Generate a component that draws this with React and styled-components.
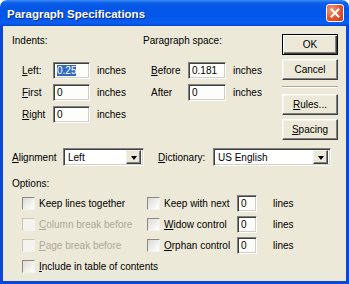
import React from 'react';
import styled, { createGlobalStyle } from 'styled-components';

const GlobalStyle = createGlobalStyle`
  html, body {
    margin: 0;
    padding: 0;
    background: #ffffff;
  }
  body {
    font-family: "Liberation Sans", Arial, sans-serif;
    font-size: 10px;
    color: #000;
  }
`;

const Window = styled.div`
  width: 349px;
  height: 284px;
  display: flex;
  flex-direction: column;
`;

const TitleBar = styled.div`
  flex: none;
  height: 26px;
  display: flex;
  align-items: center;
  justify-content: space-between;
  padding: 0 5px 0 7px;
  border-radius: 7px 7px 0 0;
  background: linear-gradient(to bottom, #3d8cf5 0px, #0b5fe9 3px, #0355e6 9px, #0358e9 18px, #0a5ff0 23px, #0046d6 26px);
`;

const Title = styled.span`
  color: #fff;
  font-weight: bold;
  font-size: 11.5px;
  padding-top: 2px;
  text-shadow: 1px 1px #0a2a8a;
`;

const CloseButton = styled.div`
  width: 16px;
  height: 16px;
  border: 1px solid #fff;
  border-radius: 3px;
  background: radial-gradient(circle at 30% 30%, #f19a7e, #e2542c 55%, #c53a14);
  display: flex;
  align-items: center;
  justify-content: center;
`;

const Body = styled.div`
  flex: 1;
  background: #ece9d8;
  border: 3px solid #0a47d8;
  border-top: 0;
  padding: 8px 0 0 9px;
`;

const TopSection = styled.div`
  display: flex;
  align-items: flex-start;
`;

const Group = styled.div`
  width: ${p => p.$width}px;
  display: flex;
  flex-direction: column;
`;

const Heading = styled.div`
  height: 12px;
  line-height: 12px;
  margin-top: 1px;
`;

const FieldList = styled.div`
  display: flex;
  flex-direction: column;
  gap: 5px;
  margin-top: ${p => p.$top || 15}px;
  padding-left: ${p => p.$indent}px;
`;

const FieldRow = styled.div`
  display: flex;
  align-items: center;
  height: 17px;
`;

const Label = styled.span`
  width: ${p => p.$width}px;
  flex: none;
  white-space: nowrap;
  color: ${p => (p.$disabled ? '#aca899' : '#000')};
`;

const Unit = styled.span`
  margin-left: ${p => p.$gap}px;
`;

const TextBox = styled.div`
  width: ${p => p.$width}px;
  height: 17px;
  box-sizing: border-box;
  border: 1px solid;
  border-color: #808080 #ffffff #ffffff #808080;
  box-shadow: inset 1px 1px #404040, inset -1px -1px #d4d0c8;
  background: #fdfdfb;
  padding: 2px 0 0 3px;
  line-height: 12px;
  white-space: nowrap;
  overflow: hidden;
`;

const Selected = styled.span`
  background: #316ac5;
  color: #fff;
`;

const ButtonColumn = styled.div`
  width: 56px;
  margin-top: 0px;
  display: flex;
  flex-direction: column;
  gap: 4px;
`;

const Button = styled.div`
  height: 21px;
  box-sizing: border-box;
  display: flex;
  align-items: center;
  justify-content: center;
  background: #ece9d8;
  border: 1px solid;
  border-color: ${p => (p.$default ? '#000' : '#fff #404040 #404040 #fff')};
  box-shadow: ${p =>
    p.$default
      ? 'inset 1px 1px #fff, inset -1px -1px #404040, inset -2px -2px #808080'
      : 'inset -1px -1px #808080, inset 1px 1px #f4f2ea'};
  font-size: 10px;
`;

const Separator = styled.div`
  height: 0;
  border-top: 1px solid #aca899;
  border-bottom: 1px solid #fff;
  margin: 2px 0 2px;
`;

const ComboRow = styled.div`
  display: flex;
  align-items: center;
  height: 18px;
  margin-top: 8px;
`;

const Combo = styled.div`
  width: ${p => p.$width}px;
  height: 18px;
  box-sizing: border-box;
  border: 1px solid;
  border-color: #808080 #ffffff #ffffff #808080;
  box-shadow: inset 1px 1px #404040, inset -1px -1px #d4d0c8;
  background: #fff;
  display: flex;
  align-items: center;
  justify-content: space-between;
  padding: 2px 2px 2px 4px;
`;

const DropButton = styled.div`
  width: 15px;
  height: 14px;
  box-sizing: border-box;
  background: #ece9d8;
  border: 1px solid;
  border-color: #f4f2ea #404040 #404040 #f4f2ea;
  box-shadow: inset -1px -1px #808080;
  display: flex;
  align-items: center;
  justify-content: center;
  &::after {
    content: '';
    border-left: 3.5px solid transparent;
    border-right: 3.5px solid transparent;
    border-top: 4px solid #000;
    margin-top: 1px;
  }
`;

const OptionsGrid = styled.div`
  display: grid;
  grid-template-columns: 125px auto;
  row-gap: 4px;
  margin-top: 5px;
  padding-left: 10px;
`;

const CheckRow = styled.div`
  display: flex;
  align-items: center;
  height: 17px;
  grid-column: ${p => (p.$wide ? '1 / 3' : 'auto')};
`;

const Box = styled.span`
  width: 13px;
  height: 13px;
  flex: none;
  box-sizing: border-box;
  border: 1px solid;
  border-color: ${p => (p.$disabled ? '#c9c7ba #f6f5ef #f6f5ef #c9c7ba' : '#8a8a85 #f3f3ee #f3f3ee #8a8a85')};
  background: ${p => (p.$disabled ? '#f4f3ee' : 'linear-gradient(135deg, #dcdcd4, #ffffff)')};
  margin-right: 4px;
`;

const U = styled.span`
  text-decoration: underline;
`;

const Lines = styled.span`
  margin-left: 16px;
`;

function Field({ label, value, selected, labelWidth, boxWidth, unitGap }) {
  return (
    <FieldRow>
      <Label $width={labelWidth}>{label}</Label>
      <TextBox $width={boxWidth}>{selected ? <Selected>{value}</Selected> : value}</TextBox>
      <Unit $gap={unitGap}>inches</Unit>
    </FieldRow>
  );
}

function Check({ children, disabled, wide }) {
  return (
    <CheckRow $wide={wide}>
      <Box $disabled={disabled} />
      <Label $disabled={disabled}>{children}</Label>
    </CheckRow>
  );
}

function CheckLines({ children, value }) {
  return (
    <CheckRow>
      <Box />
      <Label $width={73}>{children}</Label>
      <TextBox $width={20}>{value}</TextBox>
      <Lines>lines</Lines>
    </CheckRow>
  );
}

export default function App() {
  return (
    <>
      <GlobalStyle />
      <Window>
        <TitleBar>
          <Title>Paragraph Specifications</Title>
          <CloseButton>
            <svg width="10" height="10" viewBox="0 0 10 10">
              <path d="M1.5 1.5 L8.5 8.5 M8.5 1.5 L1.5 8.5" stroke="#fff" strokeWidth="2" strokeLinecap="square" />
            </svg>
          </CloseButton>
        </TitleBar>
        <Body>
          <TopSection>
            <Group $width={131}>
              <Heading>Indents:</Heading>
              <FieldList $indent={10}>
                <Field label={<><U>L</U>eft:</>} value="0.25" selected labelWidth={31} boxWidth={37} unitGap={7} />
                <Field label={<><U>F</U>irst</>} value="0" labelWidth={31} boxWidth={37} unitGap={7} />
                <Field label={<><U>R</U>ight</>} value="0" labelWidth={31} boxWidth={37} unitGap={7} />
              </FieldList>
            </Group>
            <Group $width={139}>
              <Heading>Paragraph space:</Heading>
              <FieldList $indent={8}>
                <Field label={<><U>B</U>efore</>} value="0.181" labelWidth={37} boxWidth={38} unitGap={7} />
                <Field label="After" value="0" labelWidth={37} boxWidth={38} unitGap={7} />
              </FieldList>
            </Group>
            <ButtonColumn>
              <Button $default>OK</Button>
              <Button>Cancel</Button>
              <Separator />
              <Button><span><U>R</U>ules...</span></Button>
              <Button><span><U>S</U>pacing</span></Button>
            </ButtonColumn>
          </TopSection>
          <ComboRow>
            <Label $width={51}><U>A</U>lignment</Label>
            <Combo $width={81}>
              <span>Left</span>
              <DropButton />
            </Combo>
            <Label $width={55} style={{ marginLeft: 14 }}><U>D</U>ictionary:</Label>
            <Combo $width={118}>
              <span>US English</span>
              <DropButton />
            </Combo>
          </ComboRow>
          <Heading style={{ marginTop: 12 }}>Options:</Heading>
          <OptionsGrid>
            <Check>Keep lines together</Check>
            <CheckLines value="0">Keep with next</CheckLines>
            <Check disabled><U>C</U>olumn break before</Check>
            <CheckLines value="0"><U>W</U>idow control</CheckLines>
            <Check disabled><U>P</U>age break before</Check>
            <CheckLines value="0"><U>O</U>rphan control</CheckLines>
            <Check wide><U>I</U>nclude in table of contents</Check>
          </OptionsGrid>
        </Body>
      </Window>
    </>
  );
}
